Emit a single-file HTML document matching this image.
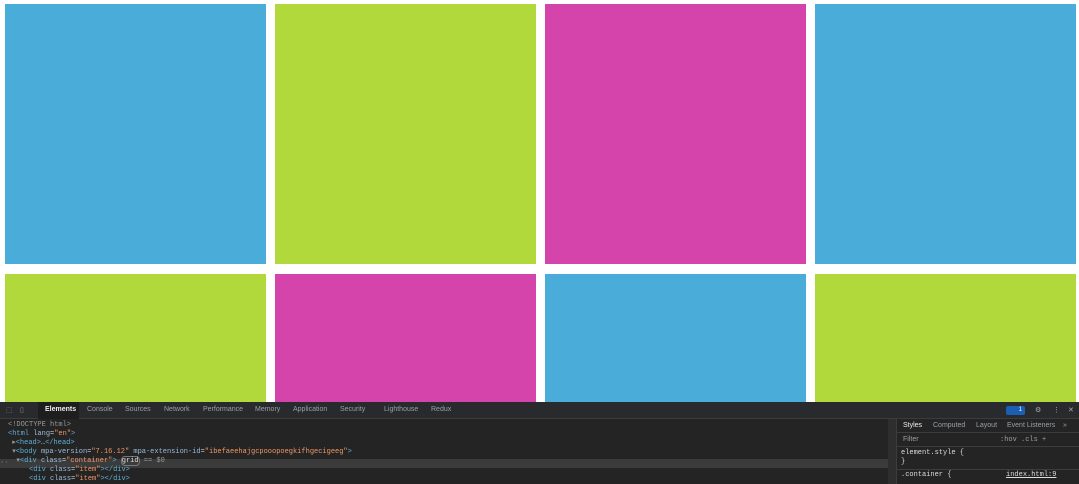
<!DOCTYPE html>
<html><head><style>
*{margin:0;padding:0;box-sizing:border-box}
body{width:1079px;height:484px;background:#fff;position:relative;overflow:hidden;font-family:"Liberation Sans",sans-serif}
.t{position:absolute}
.b{background:#49acd9}.g{background:#b1d93b}.m{background:#d444ab}
#dt{position:absolute;left:0;top:402px;width:1079px;height:82px;background:#242424;color:#ccc}
#tb{position:absolute;left:0;top:0;width:1079px;height:17px;background:#292a2d;border-bottom:1px solid #3c3c3c;font-size:7px}
#tb span{position:absolute;top:4px;color:#9aa0a6}
.code{position:absolute;font-family:"Liberation Mono",monospace;font-size:7px;white-space:pre;line-height:9px}
.tag{color:#5db0d7}.an{color:#9bbbdc}.av{color:#f29766}.gr{color:#999}
</style></head><body>
<div class="t b" style="left:5px;top:4px;width:261px;height:260px"></div>
<div class="t g" style="left:275px;top:4px;width:261px;height:260px"></div>
<div class="t m" style="left:545px;top:4px;width:261px;height:260px"></div>
<div class="t b" style="left:815px;top:4px;width:261px;height:260px"></div>
<div class="t g" style="left:5px;top:274px;width:261px;height:130px"></div>
<div class="t m" style="left:275px;top:274px;width:261px;height:130px"></div>
<div class="t b" style="left:545px;top:274px;width:261px;height:130px"></div>
<div class="t g" style="left:815px;top:274px;width:261px;height:130px"></div>
<div id="dt">
 <div id="tb">
  <span style="left:6px;color:#888">⬚</span><span style="left:20px;color:#888">▯</span>
  <div style="position:absolute;left:38px;top:0;width:41px;height:17px;background:#1e1e1e"></div>
  <span style="left:45px;color:#eee;font-weight:bold">Elements</span>
  <span style="left:87px">Console</span><span style="left:125px">Sources</span>
  <span style="left:164px">Network</span><span style="left:203px">Performance</span>
  <span style="left:255px">Memory</span><span style="left:293px">Application</span>
  <span style="left:340px">Security</span><span style="left:384px">Lighthouse</span>
  <span style="left:431px">Redux</span>
  <div style="position:absolute;left:1006px;top:4px;width:19px;height:9px;background:#1a5fb4;border-radius:2px;color:#fff;font-size:6px;text-align:right;padding-right:3px;line-height:9px">1</div>
  <span style="left:1035px;color:#aaa">⚙</span><span style="left:1053px;color:#aaa">⋮</span><span style="left:1068px;color:#aaa">✕</span>
 </div>
 <div style="position:absolute;left:0;top:57px;width:888px;height:9px;background:#3b3b3b"></div>
 <div class="code" style="left:0;top:57px;color:#888">··</div>
 <div class="code" style="left:8px;top:19px"><span class="gr">&lt;!DOCTYPE html&gt;</span>
<span class="tag">&lt;html</span> <span class="an">lang</span>=<span class="av">"en"</span><span class="tag">&gt;</span>
 <span class="gr">▸</span><span class="tag">&lt;head&gt;</span>…<span class="tag">&lt;/head&gt;</span>
 <span class="gr">▾</span><span class="tag">&lt;body</span> <span class="an">mpa-version</span>=<span class="av">"7.16.12"</span> <span class="an">mpa-extension-id</span>=<span class="av">"ibefaeehajgcpooopoegkifhgecigeeg"</span><span class="tag">&gt;</span>
  <span class="gr">▾</span><span class="tag">&lt;div</span> <span class="an">class</span>=<span class="av">"container"</span><span class="tag">&gt;</span> <span style="border:1px solid #777;border-radius:4px;color:#ddd">grid</span> <span class="gr">== $0</span>
     <span class="tag">&lt;div</span> <span class="an">class</span>=<span class="av">"item"</span><span class="tag">&gt;&lt;/div&gt;</span>
     <span class="tag">&lt;div</span> <span class="an">class</span>=<span class="av">"item"</span><span class="tag">&gt;&lt;/div&gt;</span></div>
 <div style="position:absolute;left:888px;top:17px;width:8px;height:65px;background:#2e2e2e"></div>
 <div style="position:absolute;left:896px;top:17px;width:183px;height:65px;background:#242424;border-left:1px solid #3c3c3c;font-size:7px">
  <div style="height:14px;border-bottom:1px solid #3c3c3c;position:relative;color:#9aa0a6">
   <span style="position:absolute;left:6px;top:3px;color:#eee">Styles</span>
   <span style="position:absolute;left:36px;top:3px">Computed</span>
   <span style="position:absolute;left:79px;top:3px">Layout</span>
   <span style="position:absolute;left:110px;top:3px">Event Listeners</span>
   <span style="position:absolute;left:166px;top:3px">»</span>
  </div>
  <div style="height:14px;border-bottom:1px solid #3c3c3c;position:relative;color:#9aa0a6">
   <span style="position:absolute;left:6px;top:3px">Filter</span>
   <span style="position:absolute;left:103px;top:3px;font-family:'Liberation Mono',monospace">:hov .cls +</span>
  </div>
  <div class="code" style="left:4px;top:30px;color:#ddd">element.style {
}</div>
  <div style="position:absolute;left:0;top:50px;width:183px;border-top:1px solid #3c3c3c"></div>
  <div class="code" style="left:4px;top:52px;color:#ddd">.container {             <span style="text-decoration:underline">index.html:9</span></div>
 </div>
</div>
</body></html>
